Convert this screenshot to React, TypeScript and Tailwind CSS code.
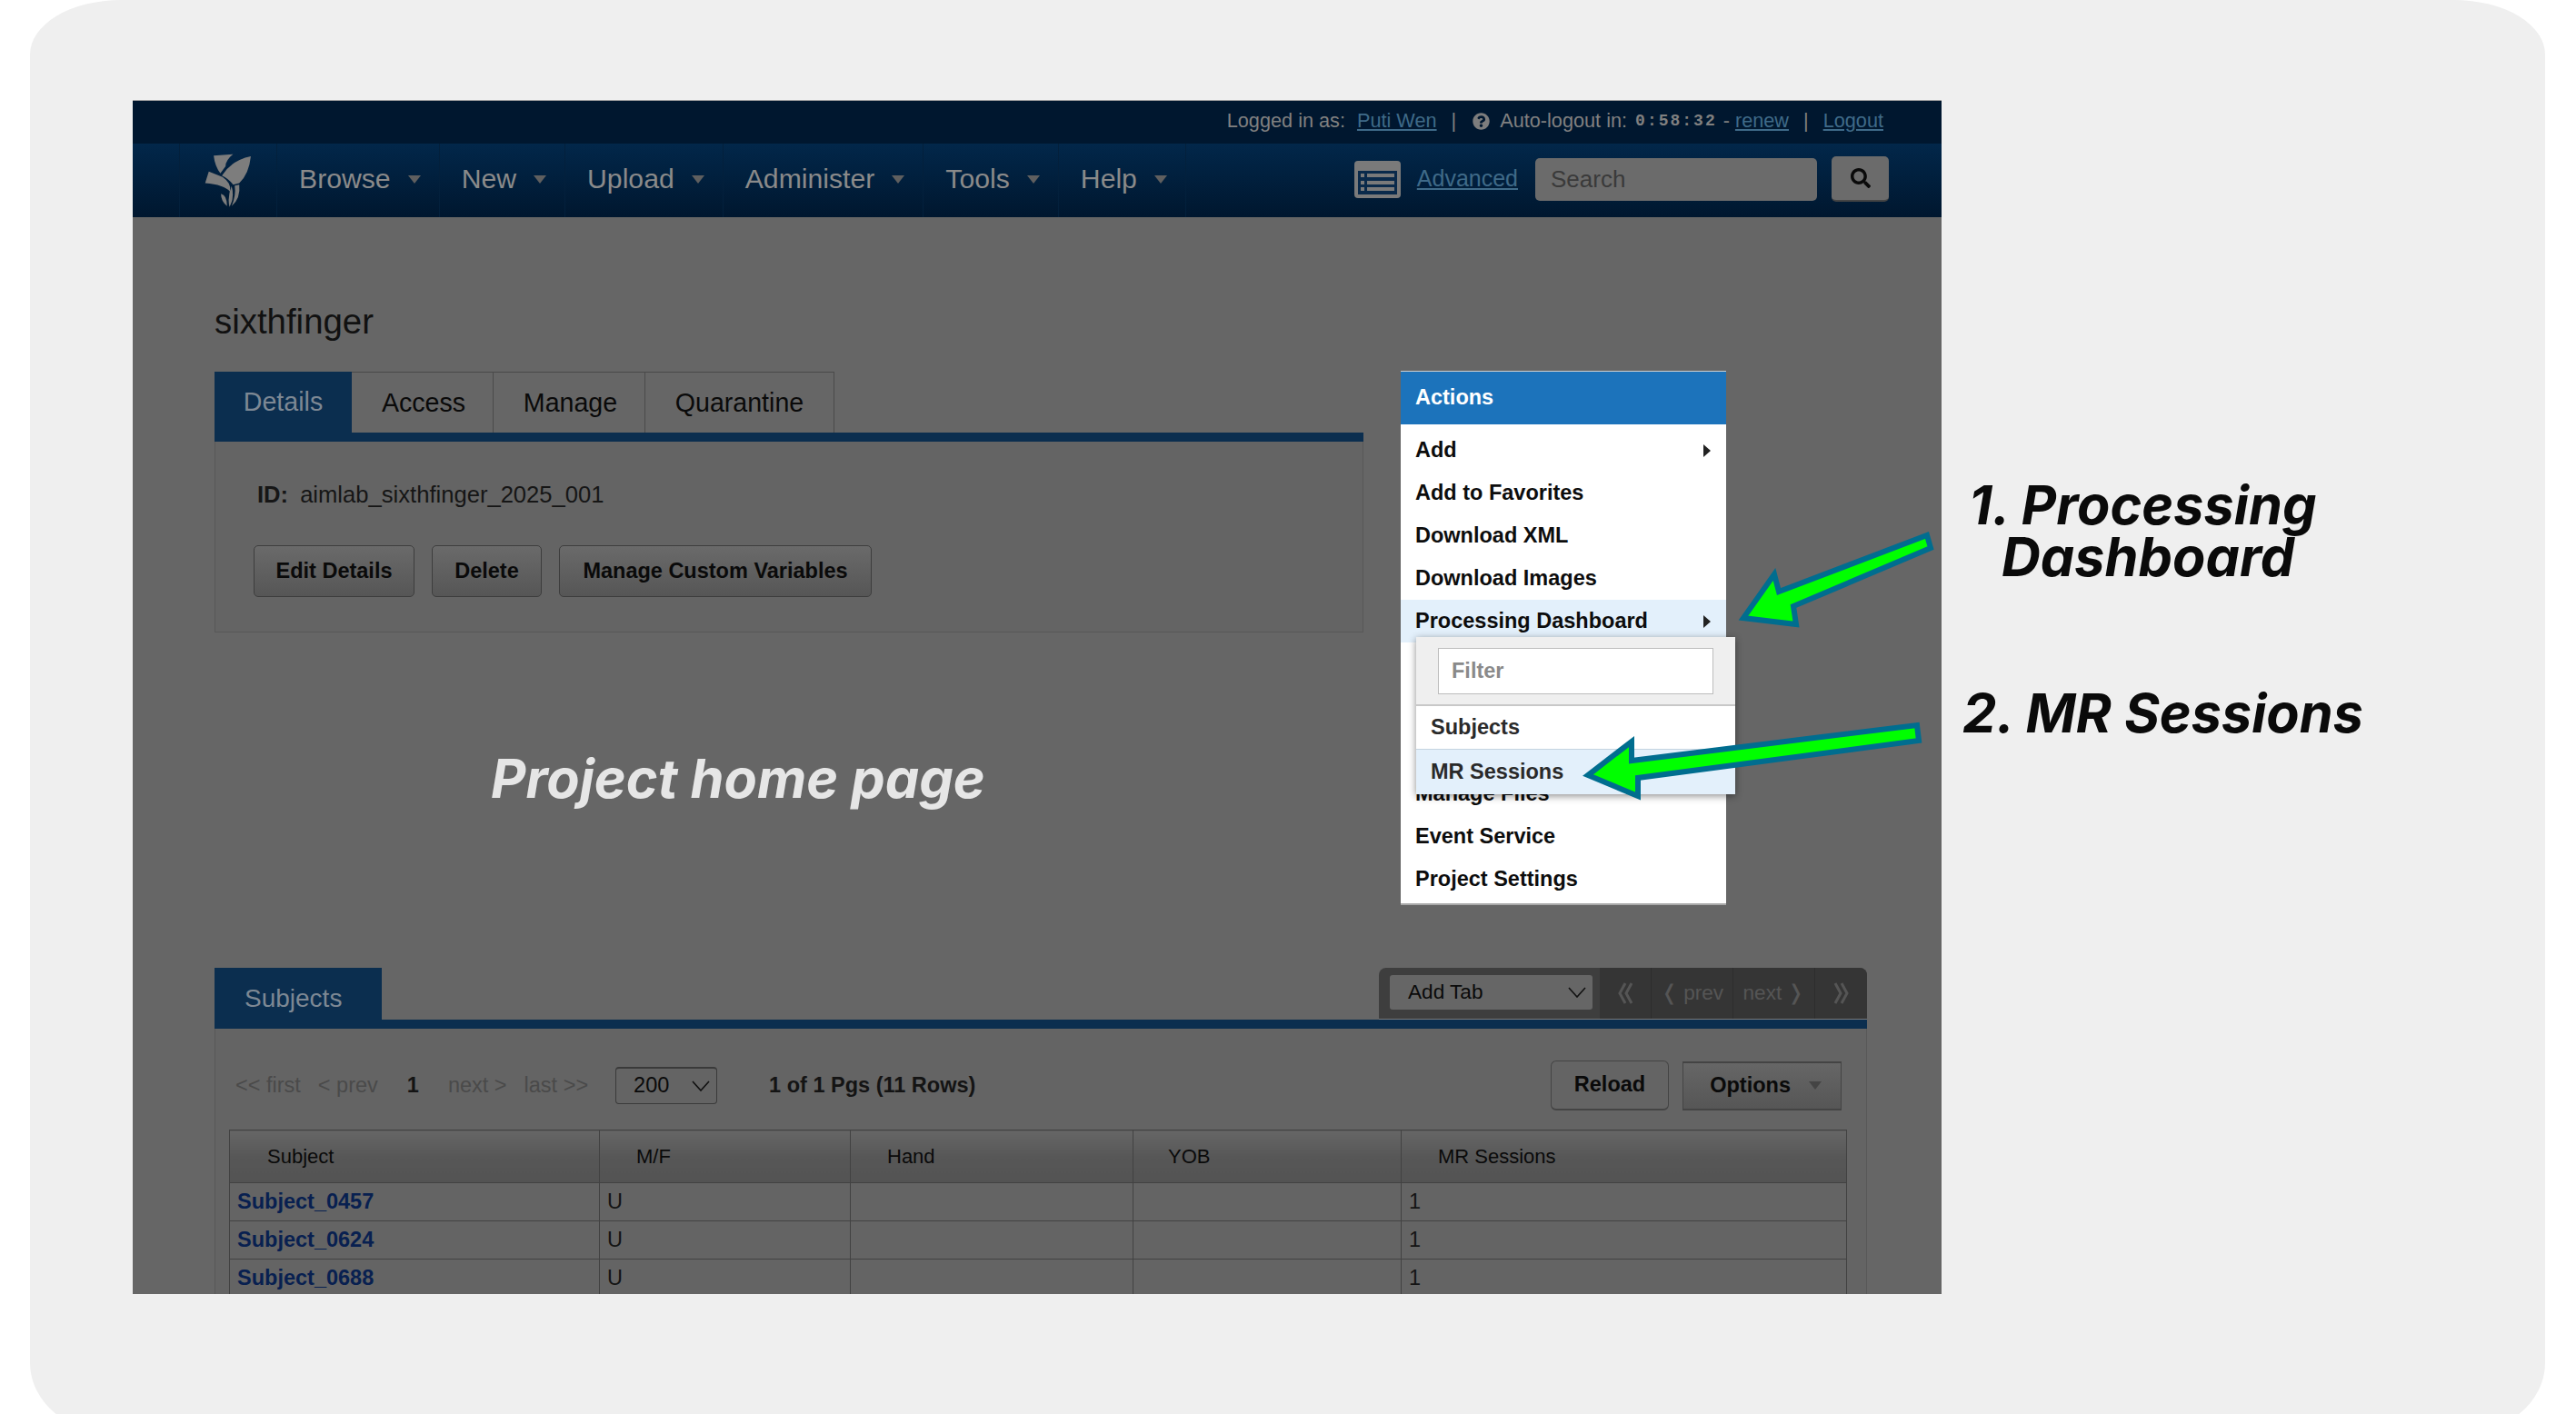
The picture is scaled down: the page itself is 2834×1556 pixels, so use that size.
import { FaQuestionCircle, FaSearch } from "react-icons/fa"

const arial = "font-['Liberation_Sans',Arial,sans-serif]"

const navItems = ["Browse", "New", "Upload", "Administer", "Tools", "Help"]
const menuTop = ["Add", "Add to Favorites", "Download XML", "Download Images"]
const subjects = ["Subject_0457", "Subject_0624", "Subject_0688"]

function Caret({ className }: { className: string }) {
    return <span className={`inline-block w-0 h-0 border-x-[7px] border-x-transparent border-t-[9px] ${className}`} />
}

function RightCaret() {
    return <span className="w-0 h-0 border-y-[7px] border-y-transparent border-l-[8px] border-l-[#222]" />
}

function Chevron() {
    return (
        <svg width="20" height="12" viewBox="0 0 20 12" fill="none" stroke="#111" strokeWidth="1.6">
            <path d="M1 1 L10 11 L19 1" />
        </svg>
    )
}

function DoubleChevron({ flip }: { flip?: boolean }) {
    return (
        <svg width="18" height="24" viewBox="0 0 18 24" fill="none" stroke="#555555" strokeWidth="3" className={flip ? "rotate-180" : ""}>
            <path d="M9 1 L3 12 L9 23" />
            <path d="M16 1 L10 12 L16 23" />
        </svg>
    )
}

function Logo() {
    return (
        <svg width="57" height="62" viewBox="70 50 170 185" fill="#7d7d7d">
            <path d="M106 60 L170 55 Q145 75 145 95 L128 118 Q110 95 106 60 Z" />
            <path d="M228 62 Q222 120 190 150 L170 155 Q155 135 133 125 Q165 75 228 62 Z" />
            <path d="M90 112 L135 130 Q165 150 160 178 Q140 155 78 150 Z" />
            <path d="M130 185 Q150 190 150 225 Q130 210 130 185 Z" />
            <path d="M165 160 Q175 200 158 228 Q150 195 165 160 Z" />
            <path d="M190 155 Q195 200 165 225 Q180 190 175 158 Z" />
        </svg>
    )
}

function ListIcon() {
    return (
        <svg width="51" height="41" viewBox="0 0 51 41">
            <rect x="0" y="0" width="51" height="41" rx="4" fill="#7a7a7a" />
            <rect x="4" y="11" width="43" height="26" fill="#0a2a4b" />
            <g fill="#7a7a7a">
                <rect x="7" y="14" width="4" height="4" />
                <rect x="7" y="22" width="4" height="4" />
                <rect x="7" y="29" width="4" height="4" />
                <rect x="14" y="14" width="30" height="4" />
                <rect x="14" y="22" width="30" height="4" />
                <rect x="14" y="29" width="30" height="4" />
            </g>
        </svg>
    )
}

function TopBar() {
    return (
        <div className="h-[47px] pb-[2px] bg-[#00172f] flex items-center justify-end pr-[64px] text-[21.7px] text-[#808080]">
            <span>Logged in as:</span>
            <span className="ml-[13px] underline text-[#3f6a88]">Puti Wen</span>
            <span className="ml-[16px]">|</span>
            <FaQuestionCircle className="ml-[18px] text-[19px] text-[#7d7d7d]" />
            <span className="ml-[11px]">Auto-logout in:</span>
            <span className="ml-[9px] font-['Liberation_Mono',monospace] font-bold text-[18px] tracking-[2px]">0:58:32</span>
            <span className="ml-[7px]">-</span>
            <span className="ml-[6px] underline text-[#3f6a88]">renew</span>
            <span className="ml-[16px]">|</span>
            <span className="ml-[16px] underline text-[#3f6a88]">Logout</span>
        </div>
    )
}

function NavBar() {
    return (
        <div className="h-[81px] bg-linear-to-b from-[#02274a] to-[#00172f] flex items-stretch">
            <div className="ml-[51px] w-[108px] border-x border-[#03203c] flex items-center justify-center">
                <Logo />
            </div>
            {navItems.map((item) => (
                <div key={item} className="flex items-center gap-[19px] pl-[24px] pr-[20px] pb-[3px] border-r border-[#03203c]">
                    <span className="text-[30.2px] text-[#8a8a8a]">{item}</span>
                    <Caret className="border-t-[#5f5f5f]" />
                </div>
            ))}
            <div className="ml-auto mr-[58px] pb-[3px] flex items-center">
                <ListIcon />
                <span className="ml-[18px] text-[25px] underline text-[#3f6a88]">Advanced</span>
                <div className="ml-[19px] w-[310px] h-[47px] rounded-[5px] bg-[#6b6b6b] flex items-center pl-[17px] text-[26px] text-[#3a3a3a]">Search</div>
                <div className="ml-[16px] w-[63px] h-[50px] rounded-[5px] bg-[#6b6b6b] border-b-2 border-[#444] flex items-center justify-center">
                    <FaSearch className="text-[22px] text-[#0a0a0a]" />
                </div>
            </div>
        </div>
    )
}

function GrayButton({ label, className }: { label: string; className: string }) {
    return (
        <div className={`h-[57px] rounded-[5px] border border-[#3d3d3d] bg-linear-to-b from-[#6a6a6a] to-[#565656] flex items-center justify-center text-[23.5px] font-bold text-[#0a0a0a] ${className}`}>
            {label}
        </div>
    )
}

function ProjectTabs() {
    return (
        <div className="w-[1264px]">
            <div className="flex h-[67px] text-[28.6px]">
                <div className="w-[151px] bg-[#0b2e4f] text-[#7d8894] flex items-center justify-center">Details</div>
                <div className="w-[156px] pl-[3px] border-t border-r border-[#4a4a4a] text-[#0a0a0a] flex items-center justify-center">Access</div>
                <div className="w-[167px] pl-[3px] border-t border-r border-[#4a4a4a] text-[#0a0a0a] flex items-center justify-center">Manage</div>
                <div className="w-[208px] border-t border-r border-[#4a4a4a] text-[#0a0a0a] flex items-center justify-center">Quarantine</div>
            </div>
            <div className="h-[10px] bg-[#0b2e4f]" />
            <div className="h-[210px] bg-[#646464] border-x border-b border-[#585858] pl-[42px] pt-[43px]">
                <div className="h-[30px] ml-[4px] flex items-center text-[25.6px] text-[#161616]">
                    <span className="font-bold">ID:</span>
                    <span className="ml-[13px]">aimlab_sixthfinger_2025_001</span>
                </div>
                <div className="flex gap-[19px] mt-[41px]">
                    <GrayButton label="Edit Details" className="w-[177px]" />
                    <GrayButton label="Delete" className="w-[121px]" />
                    <GrayButton label="Manage Custom Variables" className="w-[344px]" />
                </div>
            </div>
        </div>
    )
}

function SubjectsTable() {
    const th = "border border-[#424242] bg-linear-to-b from-[#666666] via-[#575757] to-[#535353] text-left font-normal text-[22px] text-[#0a0a0a]"
    const td = "border border-[#424242] text-[23.5px] pl-[8px]"
    return (
        <table className="table-fixed border-collapse w-[1779px]">
            <colgroup>
                <col className="w-[407px]" />
                <col className="w-[276px]" />
                <col className="w-[311px]" />
                <col className="w-[295px]" />
                <col className="w-[490px]" />
            </colgroup>
            <thead>
                <tr className="h-[58px]">
                    <th className={`${th} pl-[41px]`}>Subject</th>
                    <th className={`${th} pl-[40px]`}>M/F</th>
                    <th className={`${th} pl-[40px]`}>Hand</th>
                    <th className={`${th} pl-[38px]`}>YOB</th>
                    <th className={`${th} pl-[40px]`}>MR Sessions</th>
                </tr>
            </thead>
            <tbody>
                {subjects.map((s) => (
                    <tr key={s} className="h-[42px]">
                        <td className={`${td} font-bold text-[#082050]`}>{s}</td>
                        <td className={`${td} text-[#141414]`}>U</td>
                        <td className={td} />
                        <td className={td} />
                        <td className={`${td} text-[#141414]`}>1</td>
                    </tr>
                ))}
            </tbody>
        </table>
    )
}

function SubjectsPanel() {
    return (
        <div className="mt-[369px] w-[1818px]">
            <div className="flex justify-between h-[57px]">
                <div className="w-[184px] bg-[#0b2e4f] text-[28px] text-[#7d8894] flex items-center pl-[33px] pt-[10px]">Subjects</div>
                <div className="w-[537px] h-[57px] rounded-t-[8px] bg-[#3e3e3e] border-b border-[#7a7a7a] flex text-[#555555] text-[22.6px] overflow-hidden">
                    <div className="w-[243px] pl-[12px] pt-[8px]">
                        <div className="h-[38px] w-[223px] rounded-[3px] bg-[#666666] flex items-center justify-between pl-[20px] pr-[7px] text-[#0a0a0a]">
                            <span>Add Tab</span>
                            <Chevron />
                        </div>
                    </div>
                    <div className="w-[57px] bg-[#353535] border-r border-[#2d2d2d] flex items-center justify-center">
                        <DoubleChevron />
                    </div>
                    <div className="w-[90px] bg-[#353535] border-r border-[#2d2d2d] flex items-center justify-center">❬ prev</div>
                    <div className="w-[90px] bg-[#353535] border-r border-[#2d2d2d] flex items-center justify-center">next ❭</div>
                    <div className="flex-1 bg-[#353535] flex items-center justify-center">
                        <DoubleChevron flip />
                    </div>
                </div>
            </div>
            <div className="h-[10px] bg-[#0b2e4f]" />
            <div className="border-x border-[#585858] bg-[#646464] pl-[15px] pr-[22px] pt-[34px] pb-[40px]">
                <div className="h-[57px] mb-[20px] flex items-center text-[23.5px] text-[#4a4a4a] pl-[7px]">
                    <span>&lt;&lt; first</span>
                    <span className="ml-[19px]">&lt; prev</span>
                    <span className="ml-[32px] font-bold text-[#141414]">1</span>
                    <span className="ml-[32px]">next &gt;</span>
                    <span className="ml-[19px]">last &gt;&gt;</span>
                    <div className="ml-[30px] w-[112px] h-[41px] rounded-[4px] border border-[#3a3a3a] border-t-2 flex items-center justify-between pl-[19px] pr-[7px] text-[#0a0a0a]">
                        <span>200</span>
                        <Chevron />
                    </div>
                    <span className="ml-[57px] font-bold text-[#141414]">1 of 1 Pgs (11 Rows)</span>
                    <div className="ml-auto flex items-center gap-[15px] mr-[5px]">
                        <div className="w-[130px] h-[55px] rounded-[6px] border border-[#444] border-b-2 bg-[#646464] flex items-center justify-center font-bold text-[#0a0a0a]">Reload</div>
                        <div className="w-[175px] h-[54px] border border-[#444] border-t-2 border-b-2 bg-linear-to-b from-[#666666] to-[#565656] flex items-center justify-end gap-[20px] pr-[21px] font-bold text-[#0a0a0a]">
                            <span>Options</span>
                            <Caret className="border-t-[#444]" />
                        </div>
                    </div>
                </div>
                <SubjectsTable />
            </div>
        </div>
    )
}

function ActionsMenu() {
    const row = "h-[47px] flex items-center pl-[16px]"
    return (
        <div className="absolute left-[1395px] top-[297px] w-[358px] h-[588px] bg-white border-t border-[#cfcfcf] border-b-2 border-b-[#a9a9a9] text-[23.5px] font-bold text-[#0d0d0d]">
            <div className="h-[58px] bg-[#1c73bb] text-white flex items-center pl-[16px]">Actions</div>
            <div className="pt-[5px]">
                {menuTop.map((item) => (
                    <div key={item} className={`${row} justify-between pr-[17px]`}>
                        <span>{item}</span>
                        {item === "Add" && <RightCaret />}
                    </div>
                ))}
                <div className={`${row} justify-between pr-[17px] bg-[#e3f0fb]`}>
                    <span>Processing Dashboard</span>
                    <RightCaret />
                </div>
                <div className="h-[143px]" />
                <div className={row}>Manage Files</div>
                <div className={row}>Event Service</div>
                <div className={row}>Project Settings</div>
            </div>
            <div className="absolute left-[17px] top-[292px] w-[351px] h-[173px] bg-white shadow-[0_2px_8px_rgba(0,0,0,0.45)]">
                <div className="h-[76px] bg-[#efefef] border-b-2 border-[#c8c8c8] pl-[24px] pt-[12px]">
                    <div className="w-[303px] h-[51px] bg-white border border-[#bdbdbd] flex items-center pl-[14px] text-[#8a8a8a]">Filter</div>
                </div>
                <div className="h-[47px] flex items-center pl-[16px] text-[#2a2a2a]">Subjects</div>
                <div className="h-[50px] flex items-center pl-[16px] bg-[#e3f0fb] border-t border-[#c4d3e0] text-[#2a2a2a]">MR Sessions</div>
            </div>
        </div>
    )
}

function Annotations() {
    const label = "absolute font-['Inter',sans-serif] italic font-bold text-[#0a0a0a] text-[59.4px] leading-[57px] whitespace-nowrap"
    return (
        <>
            <svg className="absolute left-0 top-0" width="2834" height="1556" viewBox="0 0 2834 1556">
                <g fill="#00ff00" stroke="#006d8f" strokeWidth="6">
                    <polygon points="2120,589 2124,603 1973,667 1976,687 1918,680 1952,632 1957,651" />
                    <polygon points="2109,798 2111,815 1802,856 1802,876 1747,853 1795,816 1795,837" />
                </g>
            </svg>
            <div className={`${label} left-[2166px] top-[527px]`}>
                1. Processing
                <br />
                <span className="ml-[36px]">Dashboard</span>
            </div>
            <div className={`${label} left-[2159px] top-[756px]`}>2. MR Sessions</div>
        </>
    )
}

export default function App() {
    return (
        <div className={`relative w-[2834px] h-[1556px] overflow-hidden bg-white ${arial}`}>
            <div className="ml-[33px] w-[2767px] h-[1580px] bg-[#efefef] rounded-[100px_100px_100px_100px/60px_60px_80px_80px] pt-[110px] pl-[113px]">
                <div className="relative w-[1990px] h-[1314px] bg-[#666666] overflow-hidden border-t border-[#a0a0a0]">
                    <TopBar />
                    <NavBar />
                    <main className="pl-[90px] pt-[93px]">
                        <h1 className="text-[38.4px] leading-[44px] text-[#111111]">sixthfinger</h1>
                        <div className="mt-[33px]">
                            <ProjectTabs />
                        </div>
                        <SubjectsPanel />
                    </main>
                    <div className="absolute left-[394px] top-[713px] font-['Inter',sans-serif] italic font-bold text-[59.4px] leading-[64px] text-[#e6e6e6] whitespace-nowrap">Project home page</div>
                    <ActionsMenu />
                </div>
            </div>
            <Annotations />
        </div>
    )
}
